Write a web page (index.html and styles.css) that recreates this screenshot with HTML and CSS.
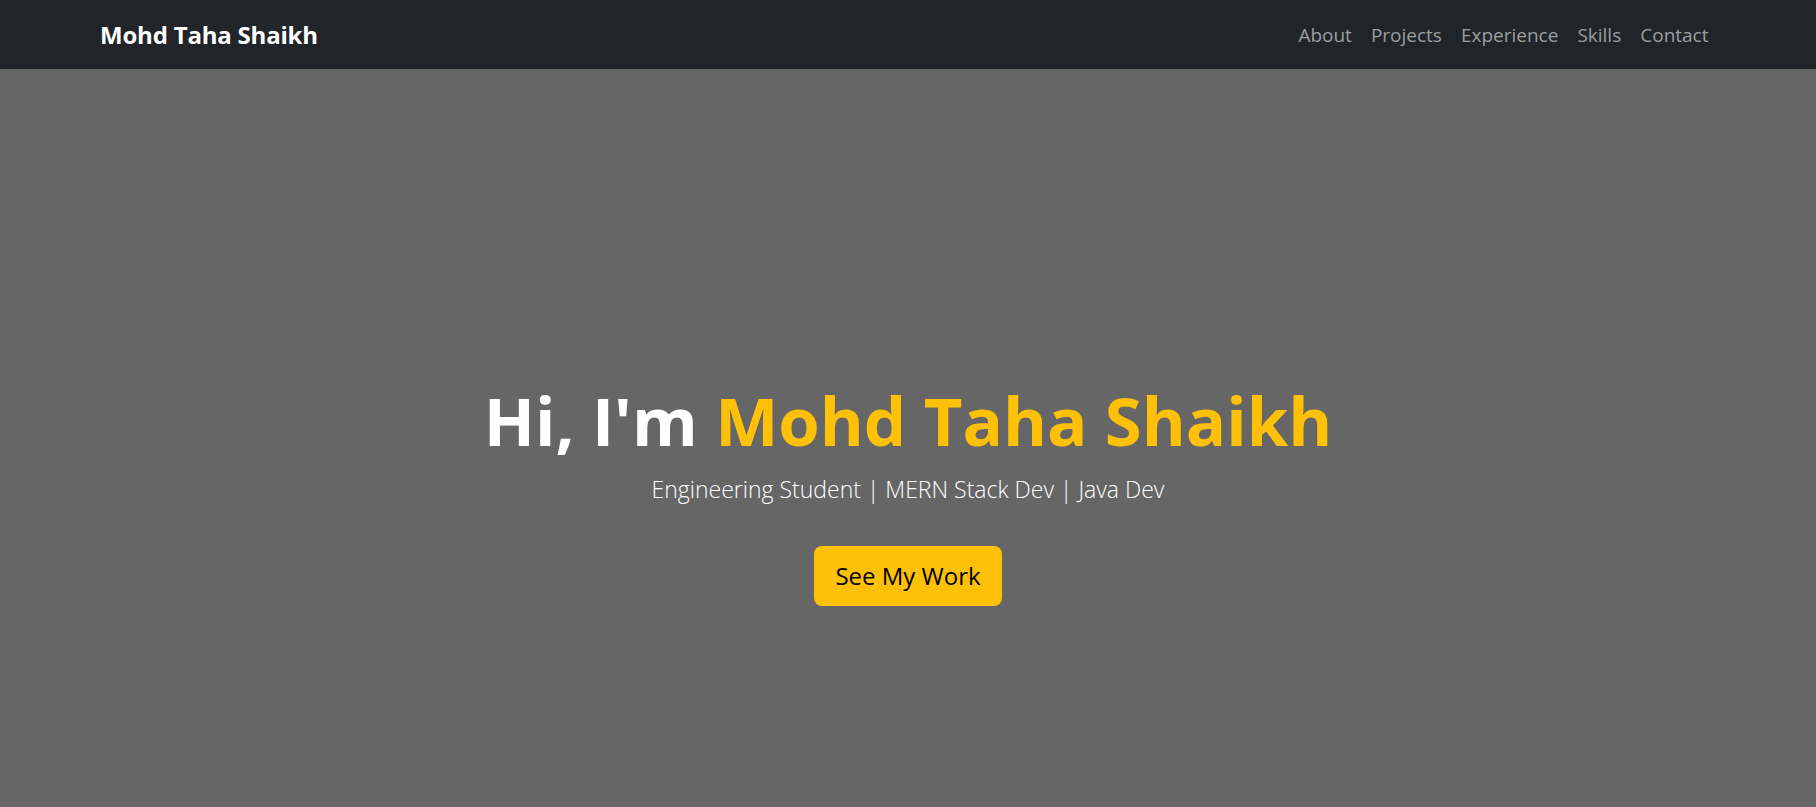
FILE: index.html
```html
<!DOCTYPE html>
<html lang="en">
<head>
<meta charset="utf-8">
<title>Mohd Taha Shaikh</title>
<link rel="stylesheet" href="styles.css">
</head>
<body>
<nav class="navbar">
  <a class="brand" href="#">Mohd Taha Shaikh</a>
  <ul class="nav-links">
    <li><a href="#about">About</a></li>
    <li><a href="#projects">Projects</a></li>
    <li><a href="#experience">Experience</a></li>
    <li><a href="#skills">Skills</a></li>
    <li><a href="#contact">Contact</a></li>
  </ul>
</nav>
<section class="hero">
  <h1 class="hero-title">Hi, I'm <span class="accent">Mohd Taha Shaikh</span></h1>
  <p class="hero-lead">Engineering Student | MERN Stack Dev | Java Dev</p>
  <a class="btn-work" href="#projects">See My Work</a>
</section>
</body>
</html>
```
FILE: styles.css
```css
* { box-sizing: border-box; }
html, body { margin: 0; padding: 0; }
body {
  font-family: "Open Sans", "Noto Sans", "DejaVu Sans", sans-serif;
  background: #666666;
  color: #fff;
  overflow: hidden;
}
.navbar {
  height: 69px;
  background: #212529;
  display: flex;
  align-items: center;
  justify-content: space-between;
  padding: 0 98px 0 100px;
}
.brand {
  color: #fff;
  text-decoration: none;
  font-weight: 700;
  font-size: 24px;
  line-height: 30px;
  letter-spacing: -0.2px;
}
.nav-links {
  list-style: none;
  margin: 0;
  padding: 0;
  display: flex;
}
.nav-links a {
  display: block;
  padding: 8px 9.5px;
  color: #9b9d9f;
  text-decoration: none;
  font-size: 19px;
  line-height: 24px;
}
.hero {
  height: 738px;
  background: #666666;
  display: flex;
  flex-direction: column;
  align-items: center;
  padding-top: 311px;
  text-align: center;
}
.hero-title {
  margin: 0;
  font-size: 67px;
  line-height: 1.2;
  font-weight: 700;
  color: #fff;
}
.accent { color: #ffc107; }
.hero-lead {
  margin: 13px 0 0;
  font-size: 23px;
  line-height: 33px;
  font-weight: 300;
  color: #fff;
}
.btn-work {
  margin-top: 40px;
  display: inline-block;
  background: #ffc107;
  color: #000;
  text-decoration: none;
  font-size: 24px;
  line-height: 36px;
  padding: 12px 21px;
  border-radius: 8px;
}
```
